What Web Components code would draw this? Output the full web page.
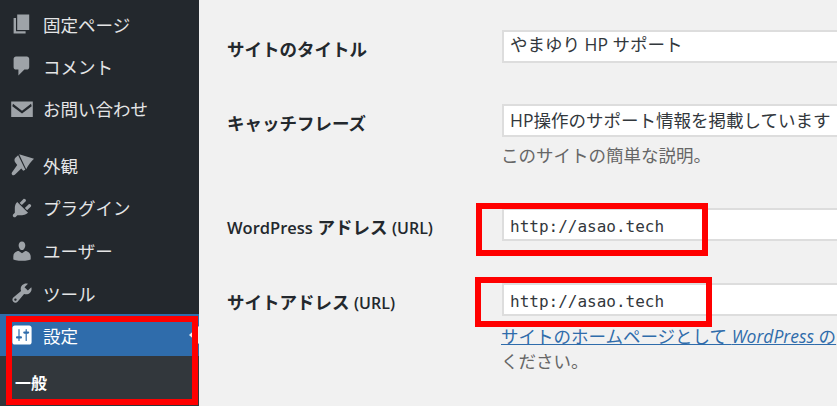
<!DOCTYPE html>
<html lang="ja">
<head>
<meta charset="utf-8">
<title>一般設定</title>
<style>
  html, body { margin: 0; height: 100%; }
  body {
    width: 837px; height: 406px; overflow: hidden; position: relative;
    display: flex; background: #f1f1f1;
    font-family: "Open Sans", "Noto Sans CJK JP", sans-serif; font-size: 17.5px;
  }
</style>
</head>
<body>
<admin-menu>
  <menu-item icon="page" style="height:42px">固定ページ</menu-item>
  <menu-item icon="comments" style="height:42px">コメント</menu-item>
  <menu-item icon="email" style="height:42px;margin-bottom:15px">お問い合わせ</menu-item>
  <menu-item icon="brush" style="height:42px">外観</menu-item>
  <menu-item icon="plugin" style="height:43px">プラグイン</menu-item>
  <menu-item icon="users" style="height:43px">ユーザー</menu-item>
  <menu-item icon="tools" style="height:42px">ツール</menu-item>
  <menu-item icon="settings" active style="height:42px">設定</menu-item>
  <sub-menu>一般</sub-menu>
</admin-menu>

<settings-form>
  <form-row style="height:74px"><span slot="label">サイトのタイトル</span><text-box style="line-height:25px">やまゆり HP サポート</text-box></form-row>
  <form-row style="height:104px"><span slot="label">キャッチフレーズ</span><text-box>HP操作のサポート情報を掲載しています</text-box><field-note>このサイトの簡単な説明。</field-note></form-row>
  <form-row style="height:75px"><span slot="label"><latin-name>WordPress</latin-name> アドレス <small-url>(URL)</small-url></span><text-box mono>http://asao.tech</text-box></form-row>
  <form-row><span slot="label">サイトアドレス <small-url>(URL)</small-url></span><text-box mono>http://asao.tech</text-box>
    <field-note link><a-link>サイトのホームページとして <i>WordPress</i> の</a-link><br>ください。</field-note></form-row>
</settings-form>

<red-mark style="left:6px;top:316px;width:192px;height:89px"></red-mark>
<red-mark style="left:476px;top:203px;width:232px;height:53px"></red-mark>
<red-mark style="left:475px;top:277px;width:237px;height:50px"></red-mark>

<script>
const ICONS = {
  page: 'M6 15V2h10v13H6zm-1 1h8v2H3V5h2v11z',
  comments: 'M5 2h9c1.1 0 2 .9 2 2v7c0 1.1-.9 2-2 2h-2l-5 5v-5H5c-1.1 0-2-.9-2-2V4c0-1.1.9-2 2-2z',
  email: 'M1 4.500h18v13H1zM2.500 6.500L10 12.300l7.500-5.800.6 2L10 14.600 1.900 8.500z',
  brush: 'M7.600 1L20 4.800c-2.500 2.200-4.800 5.200-6.500 8.800zM6.800 1.800l6 12.200-1.800.8-1.600-1.900-5.400 5.300c-1.200 1.200-3.400-.5-2.400-2l4.400-6.200-1.700-2.200c-.7-1.100-.9-2.800.2-3.800z',
  plugin: 'M13.11 4.36L9.87 7.6 8 5.73l3.24-3.24c.35-.34 1.05-.2 1.56.32.52.51.66 1.21.31 1.55zm-8 1.77l.91-1.12 9.01 9.01-1.19.84c-.71.71-2.63 1.16-3.82 1.16H6.14L4.9 17.26c-.59.59-1.54.59-2.12 0-.59-.58-.59-1.53 0-2.12l1.24-1.24v-3.88c0-1.13.4-3.19 1.09-3.89zm7.26 3.97l3.24-3.24c.34-.35 1.04-.21 1.55.31.52.51.66 1.21.31 1.55l-3.24 3.25z',
  users: 'M10 9.25c-2.27 0-2.73-3.44-2.73-3.44C7 4.02 7.82 2 9.97 2c2.16 0 2.98 2.02 2.71 3.81 0 0-.41 3.44-2.68 3.44zm0 2.57L12.72 10c2.39 0 4.52 2.33 4.52 4.53v2.49s-3.65 1.13-7.24 1.13c-3.65 0-7.24-1.13-7.24-1.13v-2.49c0-2.25 1.94-4.48 4.47-4.48z',
  tools: 'M16.68 9.77c-1.34 1.34-3.3 1.67-4.95.99l-5.41 6.52c-.99.99-2.59.99-3.58 0s-.99-2.59 0-3.57l6.52-5.42c-.68-1.65-.35-3.61.99-4.95 1.28-1.28 3.12-1.62 4.72-1.06l-2.89 2.89 2.82 2.82 2.86-2.87c.53 1.58.18 3.39-1.08 4.65zM3.81 16.21c.4.39 1.04.39 1.43 0 .4-.4.4-1.04 0-1.43-.39-.4-1.03-.4-1.43 0-.39.39-.39 1.03 0 1.43z',
  settings: 'M18 16V4c0-1.1-.9-2-2-2H4c-1.1 0-2 .9-2 2v12c0 1.1.9 2 2 2h12c1.1 0 2-.9 2-2zM8 11h1c.55 0 1 .45 1 1s-.45 1-1 1H8v1.5c0 .28-.22.5-.5.5s-.5-.22-.5-.5V13H6c-.55 0-1-.45-1-1s.45-1 1-1h1V5.5c0-.28.22-.5.5-.5s.5.22.5.5V11zm5-2h-1c-.55 0-1-.45-1-1s.45-1 1-1h1V5.500c0-.28.22-.5.5-.5s.5.22.5.5V7h1c.55 0 1 .45 1 1s-.45 1-1 1h-1v5.500c0 .28-.22.5-.5.5s-.5-.22-.5-.5V9z'
};

class Base extends HTMLElement {
  constructor() {
    super();
    this.attachShadow({ mode: 'open' });
    this.shadowRoot.innerHTML = this.view();
  }
}

class AdminMenu extends Base {
  view() {
    return `<style>
      :host { display: flex; flex-direction: column; flex: none; width: 199px; height: 406px;
        padding-top: 3px; box-sizing: border-box; background: #23282d; color: #e4e5e6; }
    </style><slot></slot>`;
  }
}

class MenuItem extends Base {
  static get observedAttributes() { return ['icon']; }
  view() {
    return `<style>
      :host { display: flex; align-items: center; position: relative; box-sizing: border-box;
        padding-left: 10px; }
      :host([active]) { background: #2f6cab; color: #fff; }
      svg { width: 24px; height: 24px; fill: #9ea3a8; margin-right: 9px; flex: none; }
      :host([active]) svg { fill: #fff; }
      :host([active])::after { content: ""; position: absolute; right: 0; top: 50%; margin-top: -9px;
        border: 9px solid transparent; border-right: 10px solid #f1f1f1; border-left-width: 0; }
    </style><svg viewBox="0 0 20 20"><path fill-rule="evenodd" d=""></path></svg><slot></slot>`;
  }
  attributeChangedCallback(name, old, value) {
    this.shadowRoot.querySelector('path').setAttribute('d', ICONS[value] || '');
  }
}

class SubMenu extends Base {
  view() {
    return `<style>
      :host { display: flex; align-items: center; flex: 1; padding: 1px 0 0 15px; box-sizing: border-box;
        background: #32373c; color: #fff; font-weight: 700; font-size: 16px; }
    </style><slot></slot>`;
  }
}

class SettingsForm extends Base {
  view() {
    return `<style>
      :host { display: flex; flex-direction: column; flex: 1; min-width: 0; padding: 30px 0 0 28px; color: #23282d; }
    </style><slot></slot>`;
  }
}

class FormRow extends Base {
  view() {
    return `<style>
      :host { display: grid; grid-template-columns: 275px 1fr; align-content: start; }
      .label { font-weight: 700; line-height: 33px; padding-top: 3px; white-space: nowrap; }
      .field { min-width: 0; }
    </style><div class="label"><slot name="label"></slot></div><div class="field"><slot></slot></div>`;
  }
}

class TextBox extends Base {
  view() {
    return `<style>
      :host { display: block; box-sizing: border-box; height: 33px; width: 400px; line-height: 29px;
        padding: 0 6px; background: #fff; border: 2px solid #ddd; color: #32373c; white-space: nowrap; overflow: hidden; }
      :host([mono]) { font-family: "DejaVu Sans Mono", "Liberation Mono", monospace; font-size: 16px; line-height: 33px; }
    </style><slot></slot>`;
  }
}

class FieldNote extends Base {
  view() {
    return `<style>
      :host { display: block; width: 335px; margin: 6px 0 0 -1px; color: #666; line-height: 25px; white-space: nowrap; }
      :host([link]) { margin: 8px 0 0 -1px; }
    </style><slot></slot>`;
  }
}

class ALink extends Base {
  view() {
    return `<style>
      :host { color: #2f6cab; text-decoration: underline; }
    </style><slot></slot>`;
  }
}

class SmallUrl extends Base {
  view() {
    return `<style>
      :host { font-weight: 600; font-size: 16px; }
    </style><slot></slot>`;
  }
}

class LatinName extends Base {
  view() {
    return `<style>
      :host { font-weight: 600; font-size: 16.5px; }
    </style><slot></slot>`;
  }
}

class RedMark extends Base {
  view() {
    return `<style>
      :host { position: absolute; box-sizing: border-box; border: 6px solid #f00; pointer-events: none; }
    </style>`;
  }
}

customElements.define('admin-menu', AdminMenu);
customElements.define('menu-item', MenuItem);
customElements.define('sub-menu', SubMenu);
customElements.define('settings-form', SettingsForm);
customElements.define('form-row', FormRow);
customElements.define('text-box', TextBox);
customElements.define('field-note', FieldNote);
customElements.define('a-link', ALink);
customElements.define('small-url', SmallUrl);
customElements.define('latin-name', LatinName);
customElements.define('red-mark', RedMark);
</script>
</body>
</html>
